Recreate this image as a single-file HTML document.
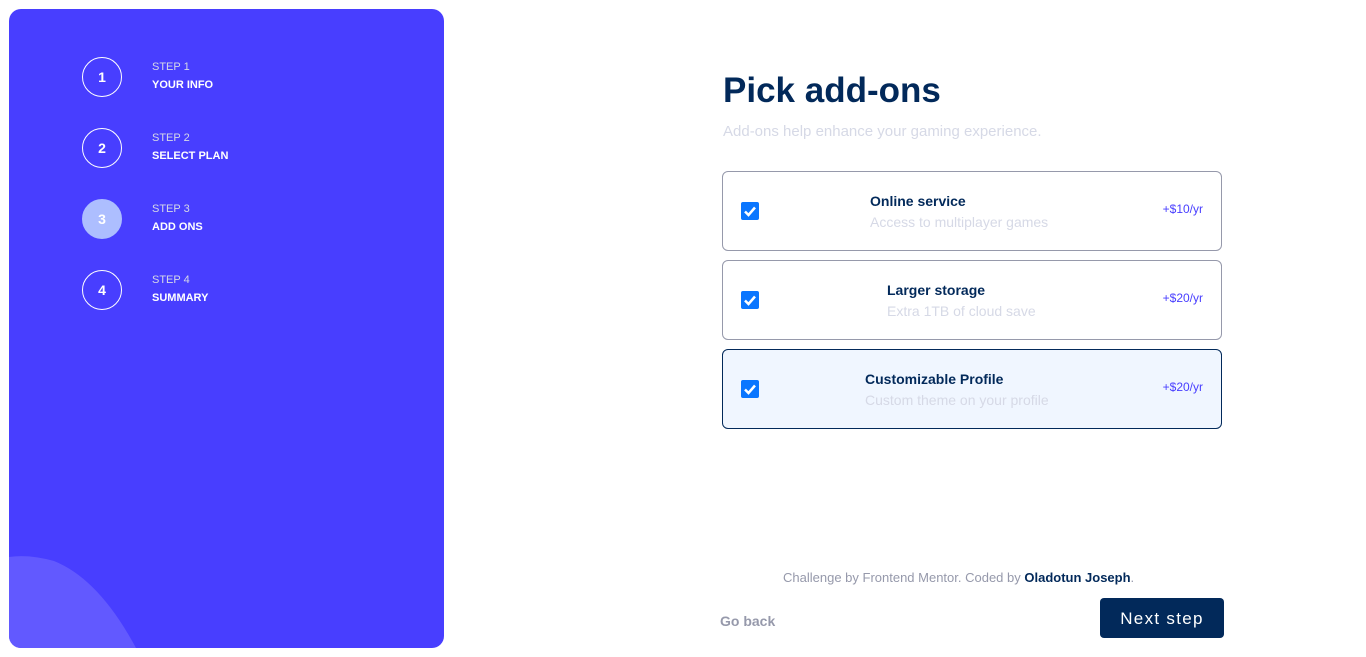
<!DOCTYPE html>
<html><head><meta charset="utf-8"><style>
*{margin:0;padding:0;box-sizing:border-box}
body{width:1366px;height:657px;background:#fff;font-family:"Liberation Sans",sans-serif;position:relative;overflow:hidden}
.side{position:absolute;left:9px;top:9px;width:435px;height:639px;background:#483EFF;border-radius:12px;overflow:hidden}
.circ{position:absolute;left:73px;width:40px;height:40px;border:1px solid #fff;border-radius:50%;color:#fff;font-weight:bold;font-size:14px;text-align:center;line-height:39px}
.circ.act{background:#ADBEFF;border-color:#ADBEFF}
.lab{position:absolute;left:143px;color:#fff;font-size:11px;line-height:18px}
.lab span{display:block;color:#d6d9e6}
.lab b{font-weight:bold}
h1{position:absolute;left:723px;top:71px;font-size:35px;color:#02295a;font-weight:bold}
.sub{position:absolute;left:723px;top:123px;font-size:15px;color:#d6d9e6}
.card{position:absolute;left:722px;width:500px;height:80px;border:1px solid #9699ab;border-radius:6px}
.card.sel{background:#F0F6FF;border-color:#02295a}
.cb{position:absolute;left:18px;top:30px;width:18px;height:18px;background:#0a76ff;border-radius:2px}
.t{position:absolute;top:21px;font-size:14px;font-weight:bold;color:#02295a}
.d{position:absolute;top:42px;font-size:14px;color:#d6d9e6;white-space:nowrap}
.p{position:absolute;right:18px;top:30px;font-size:12px;color:#483EFF}
.foot{position:absolute;left:783px;top:570px;font-size:13px;color:#9699ab}
.foot b{color:#02295a}
.back{position:absolute;left:720px;top:613px;font-size:14px;font-weight:bold;color:#9699ab}
.next{position:absolute;left:1100px;top:598px;width:124px;height:40px;background:#02295a;border-radius:4px;color:#fff;font-size:17px;text-align:center;line-height:42px;letter-spacing:1.3px}
</style></head><body>
<div class="side">
<div class="circ" style="top:48px">1</div>
<div class="lab" style="top:49px"><span>STEP 1</span><b>YOUR INFO</b></div>
<div class="circ" style="top:119px">2</div>
<div class="lab" style="top:120px"><span>STEP 2</span><b>SELECT PLAN</b></div>
<div class="circ act" style="top:190px">3</div>
<div class="lab" style="top:191px"><span>STEP 3</span><b>ADD ONS</b></div>
<div class="circ" style="top:261px">4</div>
<div class="lab" style="top:262px"><span>STEP 4</span><b>SUMMARY</b></div>
<svg style="position:absolute;left:0;top:0" width="436" height="639"><path d="M0 548 Q20 545 45 552 Q90 570 127 639 L0 639 Z" fill="#6259FF"/></svg>
</div>
<h1>Pick add-ons</h1>
<div class="sub">Add-ons help enhance your gaming experience.</div>
<div class="card" style="top:171px"><div class="cb"><svg width="18" height="18"><path d="M4 9.5 L7.5 13 L14 5.5" stroke="#fff" stroke-width="2.5" fill="none"/></svg></div><div class="t" style="left:147px">Online service</div><div class="d" style="left:147px">Access to multiplayer games</div><div class="p">+$10/yr</div></div>
<div class="card" style="top:260px"><div class="cb"><svg width="18" height="18"><path d="M4 9.5 L7.5 13 L14 5.5" stroke="#fff" stroke-width="2.5" fill="none"/></svg></div><div class="t" style="left:164px">Larger storage</div><div class="d" style="left:164px">Extra 1TB of cloud save</div><div class="p">+$20/yr</div></div>
<div class="card sel" style="top:349px"><div class="cb"><svg width="18" height="18"><path d="M4 9.5 L7.5 13 L14 5.5" stroke="#fff" stroke-width="2.5" fill="none"/></svg></div><div class="t" style="left:142px">Customizable Profile</div><div class="d" style="left:142px">Custom theme on your profile</div><div class="p">+$20/yr</div></div>
<div class="foot">Challenge by Frontend Mentor. Coded by <b>Oladotun Joseph</b>.</div>
<div class="back">Go back</div>
<div class="next">Next step</div>
</body></html>
